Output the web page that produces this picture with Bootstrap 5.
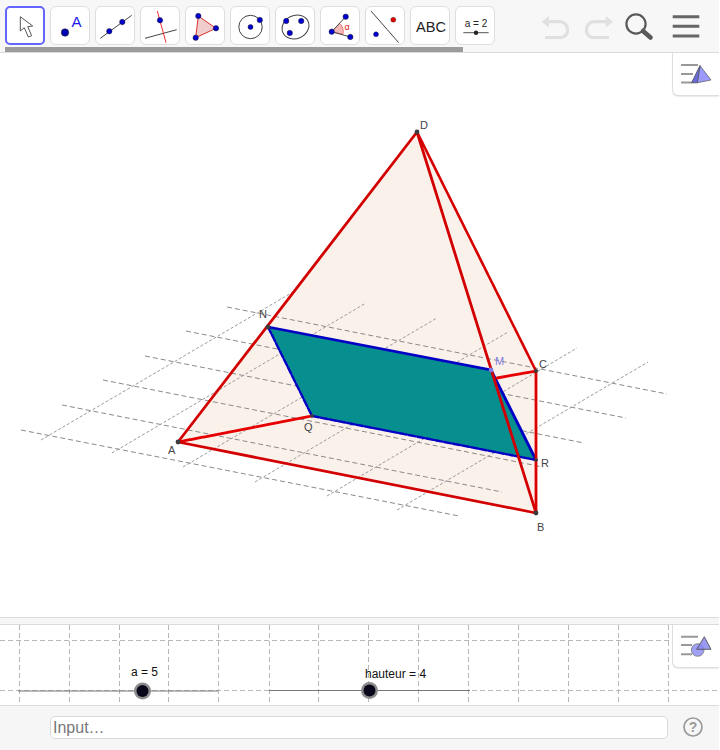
<!DOCTYPE html>
<html lang="fr">
<head>
<meta charset="utf-8">
<title>GeoGebra</title>
<link rel="stylesheet" href="https://cdn.jsdelivr.net/npm/bootstrap@5.3.0/dist/css/bootstrap.min.css">
<style>
html,body{height:750px;overflow:hidden;background:#fff;font-family:"Liberation Sans",Arial,sans-serif}
.gg-app{width:719px;height:750px;position:relative;overflow:hidden}
.gg-top{height:53px;background:#f7f7f7;border-bottom:1px solid #dcdcdc;position:relative}
.gg-tools{padding:6px 0 0 5px;gap:5px}
.gg-tool{width:40px;height:39px;padding:0;background:#fff;border:1px solid #dedede;border-radius:6px;flex:none;display:block}
.gg-tool.gg-on,.gg-tool.gg-on:hover{border:2px solid #6464ff;border-radius:5px}
.gg-tool svg{display:block;position:relative}
.gg-tool.gg-on svg{margin:-1px}
.gg-scroll{height:5px;width:458px;background:#9b9b9b;margin:2px 0 0 5px}
.gg-actions{position:absolute;left:0;top:0}
.gg-canvas{display:block}
.gg-band{height:8px;background:#f6f6f6;border-top:1px solid #dcdcdc;border-bottom:1px solid #dcdcdc}
.gg-bar{height:45px;background:#f6f6f6;border-top:1px solid #dcdcdc;padding:10px 0 0 50px;gap:15px}
.gg-input.form-control{width:618px;height:23px;min-height:0;padding:0 2px;border:1px solid #dadada;border-radius:5px;font-size:16px;line-height:21px;font-family:"Liberation Sans",Arial,sans-serif;background:#fff}
.gg-input::placeholder{color:#777;opacity:1}
.gg-tab{position:absolute;right:0;width:47px;height:43px;background:#fff;border-left:1px solid #dedede;border-bottom:1px solid #dedede;border-bottom-left-radius:6px;box-shadow:0 1px 1px rgba(0,0,0,.08)}
.gg-tab-a{top:53px}
.gg-tab-b{top:625px}
.gg-lab{font-family:"Liberation Sans",Arial,sans-serif;font-size:11px;fill:#444}
.gg-sl{font-family:"Liberation Sans",Arial,sans-serif;font-size:12px;fill:#111}
</style>
</head>
<body>
<div class="gg-app">
  <div class="gg-top">
    <svg class="gg-actions" width="719" height="52" viewBox="0 0 719 52" aria-hidden="true">
      <g fill="none" stroke="#e0e0e0" stroke-width="3.2">
        <path d="M548 21.700H560a7.700 7.700 0 0 1 7.500 8v0a7 7 0 0 1-7.500 7.800H545"/>
        <path d="M606 21.700H594a7.700 7.700 0 0 0-7.500 8v0a7 7 0 0 0 7.500 7.800H609"/>
      </g>
      <path d="M541.700 21.700 549 16v11.400zM605.700 16l7.300 5.700-7.300 5.700z" fill="#e0e0e0"/>
      <circle cx="636" cy="24" r="9.600" fill="none" stroke="#595959" stroke-width="2.200"/>
      <path d="M643 31 650.500 37.500" stroke="#595959" stroke-width="4.600" stroke-linecap="round"/>
      <path d="M672.700 16.700H699.300M672.700 26.300H699.300M672.700 36H699.300" stroke="#666" stroke-width="3"/>
    </svg>
    <div class="gg-tools d-flex">
      <button type="button" class="btn gg-tool gg-on" aria-label="Move"><svg width="40" height="39" viewBox="0 0 40 39"><path d="M14.300 9.700V24L18.300 20.700 22.300 30 25.700 28.700 21.700 19.700 26.700 19Z" fill="#fff" stroke="#555" stroke-width="1"/></svg></button>
      <button type="button" class="btn gg-tool" aria-label="Point"><svg width="40" height="39" viewBox="0 0 40 39"><circle cx="14" cy="25.500" r="3.700" fill="#0000b4" stroke="#222" stroke-width=".6"/><text x="20.500" y="20" font-family="Liberation Sans" font-size="15" fill="#1a1ae6">A</text></svg></button>
      <button type="button" class="btn gg-tool" aria-label="Line"><svg width="40" height="39" viewBox="0 0 40 39"><path d="M4.300 31.300 35.700 8.300" stroke="#444" stroke-width="1"/><circle cx="13.300" cy="24.300" r="2.700" fill="#0000d0" stroke="#222" stroke-width=".5"/><circle cx="26.300" cy="15" r="2.700" fill="#0000d0" stroke="#222" stroke-width=".5"/></svg></button>
      <button type="button" class="btn gg-tool" aria-label="Perpendicular"><svg width="40" height="39" viewBox="0 0 40 39"><path d="M4 31.300 35.700 22.700" stroke="#444" stroke-width="1"/><path d="M16.300 4 25 35.700" stroke="#f03030" stroke-width="1"/><circle cx="19" cy="13.300" r="2.700" fill="#0000d0" stroke="#222" stroke-width=".5"/></svg></button>
      <button type="button" class="btn gg-tool" aria-label="Polygon"><svg width="40" height="39" viewBox="0 0 40 39"><path d="M12.300 9 30 21.300 9.700 30.700Z" fill="#f0cccc" stroke="#d93030" stroke-width="1"/><circle cx="12.300" cy="9" r="2.700" fill="#0000d0" stroke="#222" stroke-width=".5"/><circle cx="30" cy="21.300" r="2.700" fill="#0000d0" stroke="#222" stroke-width=".5"/><circle cx="9.700" cy="30.700" r="2.700" fill="#0000d0" stroke="#222" stroke-width=".5"/></svg></button>
      <button type="button" class="btn gg-tool" aria-label="Circle"><svg width="40" height="39" viewBox="0 0 40 39"><circle cx="19.500" cy="20" r="11.700" fill="none" stroke="#444" stroke-width="1"/><circle cx="19.500" cy="20" r="2.500" fill="#0000d0" stroke="#222" stroke-width=".5"/><circle cx="28.800" cy="13" r="2.700" fill="#0000d0" stroke="#222" stroke-width=".5"/></svg></button>
      <button type="button" class="btn gg-tool" aria-label="Ellipse"><svg width="40" height="39" viewBox="0 0 40 39"><ellipse cx="19.500" cy="20" rx="13.800" ry="11.500" transform="rotate(-25 19.500 20)" fill="none" stroke="#444" stroke-width="1"/><circle cx="10.200" cy="14" r="2.700" fill="#0000d0" stroke="#222" stroke-width=".5"/><circle cx="25.200" cy="14" r="2.700" fill="#0000d0" stroke="#222" stroke-width=".5"/><circle cx="13.800" cy="26" r="2.700" fill="#0000d0" stroke="#222" stroke-width=".5"/></svg></button>
      <button type="button" class="btn gg-tool" aria-label="Angle"><svg width="40" height="39" viewBox="0 0 40 39"><path d="M10.700 24.700 18.600 16.300A11.500 11.500 0 0 1 21.900 27.400Z" fill="#f4b8b8" stroke="#e05050" stroke-width=".7"/><path d="M24.700 9.700 10.700 24.700 29.300 30" fill="none" stroke="#444" stroke-width="1"/><circle cx="10.700" cy="24.700" r="2.700" fill="#0000d0" stroke="#222" stroke-width=".5"/><circle cx="24.700" cy="9.700" r="2.700" fill="#0000d0" stroke="#222" stroke-width=".5"/><circle cx="29.300" cy="30" r="2.700" fill="#0000d0" stroke="#222" stroke-width=".5"/><text x="23.500" y="23" font-family="Liberation Sans" font-size="9" fill="#e02020">α</text></svg></button>
      <button type="button" class="btn gg-tool" aria-label="Reflect"><svg width="40" height="39" viewBox="0 0 40 39"><path d="M5 4 32.700 35.700" stroke="#444" stroke-width="1"/><circle cx="27.300" cy="12.700" r="2.500" fill="#e00000" stroke="#333" stroke-width=".4"/><circle cx="10" cy="27.300" r="2.500" fill="#0000d0" stroke="#333" stroke-width=".4"/></svg></button>
      <button type="button" class="btn gg-tool" aria-label="Text"><svg width="40" height="39" viewBox="0 0 40 39"><text x="20" y="25" text-anchor="middle" font-family="Liberation Sans" font-size="14.500" fill="#222">ABC</text></svg></button>
      <button type="button" class="btn gg-tool" aria-label="Slider"><svg width="40" height="39" viewBox="0 0 40 39"><text x="20" y="20" text-anchor="middle" font-family="Liberation Sans" font-size="10" fill="#222">a = 2</text><path d="M7.300 25.700H32.700" stroke="#555" stroke-width="1"/><circle cx="20" cy="25.700" r="2.200" fill="#222"/></svg></button>
    </div>
    <div class="gg-scroll"></div>
  </div>

  <svg class="gg-canvas" width="719" height="564" viewBox="0 53 719 564" role="img" aria-label="Tétraèdre ABCD">
    <path d="M178 442 417 132 536 371 536 513Z" fill="#fbf1eb"/>
    <g fill="none" stroke="#8a8a8a" stroke-width="1" stroke-dasharray="5 3">
      <path d="M21 430 459 516M62 405 502 492M103 380 543 467M145 356 584 443M186 331 626 418M227 307 667 394"/>
    </g>
    <g fill="none" stroke="#9a9a9a" stroke-width="1" stroke-dasharray="3 2">
      <path d="M41 440 293 292M112 453 366 303M183 467 437 318M255 482 508 332M327 496 577 348M397 510 648 362"/>
    </g>
    <path d="M268 327 491 370 536 460 312 416Z" fill="#078f8f"/>
    <g fill="none" stroke-linecap="round">
      <path d="M268 327 491 370 536 460" stroke="#0000c4" stroke-width="2.800"/>
      <path d="M268 327 312 416 536 460" stroke="#0000c4" stroke-width="2.400" stroke-dasharray="7 2"/>
      <path d="M178 442 312 416M497 378 536 371" stroke="#e60000" stroke-width="2.800" stroke-dasharray="12 1"/>
      <path d="M417 132 536 371" stroke="#d60000" stroke-width="2.600" stroke-dasharray="9 1"/>
      <path d="M536 371V513" stroke="#dd0000" stroke-width="2.800"/>
      <path d="M178 442 417 132 536 513Z" stroke="#d20000" stroke-width="2.800" stroke-linejoin="round"/>
    </g>
    <g fill="#3c3c3c">
      <circle cx="178" cy="442" r="2.400"/><circle cx="417" cy="132" r="2.400"/><circle cx="536" cy="513" r="2.400"/><circle cx="536" cy="371" r="2"/><circle cx="268" cy="327" r="2.400"/><circle cx="312" cy="416" r="1.800"/><circle cx="536" cy="460" r="1.800"/>
    </g>
    <circle cx="491" cy="370" r="2.400" fill="#7d7de0"/>
    <text class="gg-lab" x="420" y="129">D</text>
    <text class="gg-lab" x="259" y="318">N</text>
    <text class="gg-lab" x="304" y="431">Q</text>
    <text class="gg-lab" x="168" y="454">A</text>
    <text class="gg-lab" x="539" y="368">C</text>
    <text class="gg-lab" x="495" y="365" style="fill:#8080e0">M</text>
    <text class="gg-lab" x="541" y="467">R</text>
    <text class="gg-lab" x="537" y="531">B</text>
  </svg>

  <div class="gg-band"></div>

  <svg class="gg-canvas" width="719" height="80" viewBox="0 625 719 80" role="img" aria-label="Curseurs">
    <g stroke="#b8b8b8" stroke-width="1" stroke-dasharray="5 3" fill="none">
      <path d="M19.500 625V705M69.500 625V705M119.500 625V705M168.500 625V705M218.500 625V705M269.500 625V705M318.500 625V705M368.500 625V705M418.500 625V705M468.500 625V705M518.500 625V705M568.500 625V705M618.500 625V705M668.500 625V705"/>
      <path d="M0 640.500H719M0 690.500H719"/>
    </g>
    <path d="M18 691H218M269 690.500H470" stroke="#777" stroke-width="1"/>
    <circle cx="142.500" cy="691" r="8.500" fill="#8c8c8c"/><circle cx="142.500" cy="691" r="6" fill="#08081a"/>
    <circle cx="369.500" cy="690.500" r="8.500" fill="#8c8c8c"/><circle cx="369.500" cy="690.500" r="6" fill="#08081a"/>
    <text class="gg-sl" x="131" y="676">a = 5</text>
    <text class="gg-sl" x="365" y="678">hauteur = 4</text>
  </svg>

  <div class="gg-bar d-flex align-items-start">
    <input type="text" class="form-control gg-input" placeholder="Input…" aria-label="Input">
    <svg width="22" height="22" viewBox="0 0 22 22" aria-hidden="true"><circle cx="10" cy="11" r="9" fill="none" stroke="#9a9a9a" stroke-width="1.700"/><text x="10" y="16" text-anchor="middle" font-family="Liberation Sans" font-size="14" font-weight="700" fill="#9a9a9a">?</text></svg>
  </div>

  <div class="gg-tab gg-tab-a">
    <svg width="46" height="42" viewBox="673 53 46 42" aria-hidden="true">
      <path d="M681 65H698M681 74H693M681 82.500H692" stroke="#999" stroke-width="2"/>
      <path d="M700 65.700 711 80 697.300 82.700 691.700 82.700Z" fill="#9a9aff" stroke="#666" stroke-width=".8"/>
      <path d="M700 65.700 697.300 82.700" stroke="#555" stroke-width=".8"/>
      <path d="M700 65.700 691.700 82.700 697.300 82.700Z" fill="#6a6ad8" stroke="#555" stroke-width=".6"/>
    </svg>
  </div>
  <div class="gg-tab gg-tab-b">
    <svg width="46" height="42" viewBox="673 625 46 42" aria-hidden="true">
      <path d="M681 636.700H698M681 645H692M681 654.300H692" stroke="#999" stroke-width="2"/>
      <circle cx="697.700" cy="650" r="6.300" fill="#a0a0f4" stroke="#777" stroke-width=".8"/>
      <path d="M704.300 636.700 711 649.300H696.700Z" fill="#8888f0" fill-opacity=".85" stroke="#555" stroke-width=".9"/>
    </svg>
  </div>
</div>
<script src="https://cdn.jsdelivr.net/npm/bootstrap@5.3.0/dist/js/bootstrap.bundle.min.js"></script>
</body>
</html>
